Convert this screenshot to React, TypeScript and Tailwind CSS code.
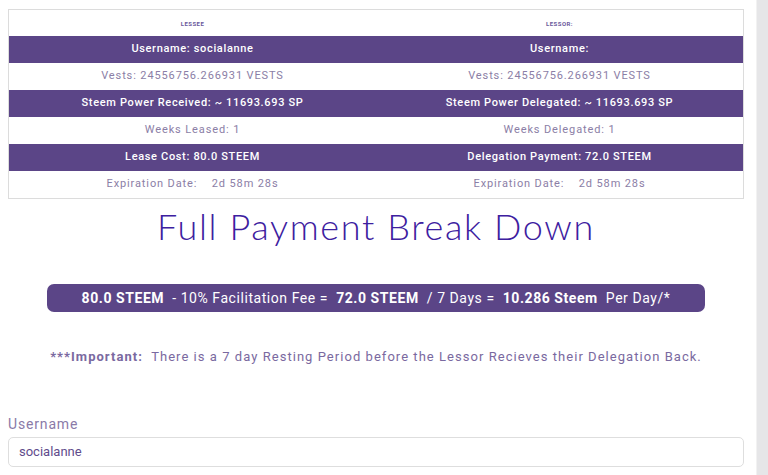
import React from "react";

const rows: { left: string; right: string; dark: boolean }[] = [
  { left: "Username: socialanne", right: "Username:", dark: true },
  { left: "Vests: 24556756.266931 VESTS", right: "Vests: 24556756.266931 VESTS", dark: false },
  { left: "Steem Power Received: ~ 11693.693 SP", right: "Steem Power Delegated: ~ 11693.693 SP", dark: true },
  { left: "Weeks Leased: 1", right: "Weeks Delegated: 1", dark: false },
  { left: "Lease Cost: 80.0 STEEM", right: "Delegation Payment: 72.0 STEEM", dark: true },
  { left: "Expiration Date:\u00a0\u00a0\u00a0 2d 58m 28s", right: "Expiration Date:\u00a0\u00a0\u00a0 2d 58m 28s", dark: false },
];

export default function App() {
  return (
    <div className="flex h-[475px] w-[768px] overflow-hidden bg-white" style={{ fontFamily: "Roboto, 'Liberation Sans', sans-serif" }}>
      <div className="flex w-[756px] flex-col pl-2 pr-3 pt-[9px]">
        <div className="border border-[#dcdcdc]">
          <div className="grid h-[26px] grid-cols-2 items-center text-center text-[6px] font-bold tracking-[0.08em] text-[#6b5a9c]">
            <div>LESSEE</div>
            <div>LESSOR:</div>
          </div>
          {rows.map((r, i) => (
            <div
              key={i}
              className={
                r.dark
                  ? "grid h-[27px] grid-cols-2 items-center bg-[#5b4587] text-center text-[11px] font-medium tracking-[0.06em] text-white"
                  : "grid h-[27px] grid-cols-2 items-center bg-white text-center text-[11px] tracking-[0.08em] text-[#8b7ea6]"
              }
            >
              <div className="whitespace-pre">{r.left}</div>
              <div className="whitespace-pre">{r.right}</div>
            </div>
          ))}
        </div>

        <h1
          className="mt-[5px] text-center text-[36px] font-light leading-[44px] tracking-[0.045em] text-[#3d209f]"
          style={{ fontFamily: "Lato, 'Open Sans', sans-serif" }}
        >
          Full Payment Break Down
        </h1>

        <div className="mx-[39px] mt-[36px] flex h-[28px] items-center justify-center rounded-[7px] bg-[#5b4587] text-[14px] tracking-[0.04em] text-white">
          <span className="font-bold">80.0 STEEM</span>
          <span>&nbsp; - 10% Facilitation Fee = &nbsp;</span>
          <span className="font-bold">72.0 STEEM</span>
          <span>&nbsp; / 7 Days = &nbsp;</span>
          <span className="font-bold">10.286 Steem</span>
          <span>&nbsp; Per Day/*</span>
        </div>

        <p className="mt-[36px] text-center text-[13px] leading-[18px] tracking-[0.08em] text-[#7a69a0]">
          <span className="font-bold">***Important:</span>&nbsp; There is a 7 day Resting Period before the Lessor Recieves their Delegation Back.
        </p>

        <label className="mt-[48px] text-[14px] leading-[20px] tracking-[0.06em] text-[#8a7aa8]">Username</label>
        <div className="mt-[3px] flex h-[30px] items-center rounded-[5px] border border-[#dedede] px-[10px] text-[13px] text-[#5f4c8c]">
          socialanne
        </div>
      </div>
      <div className="h-full w-[12px] border-l border-[#f2f2f2] bg-[#e6e6e8]" />
    </div>
  );
}
